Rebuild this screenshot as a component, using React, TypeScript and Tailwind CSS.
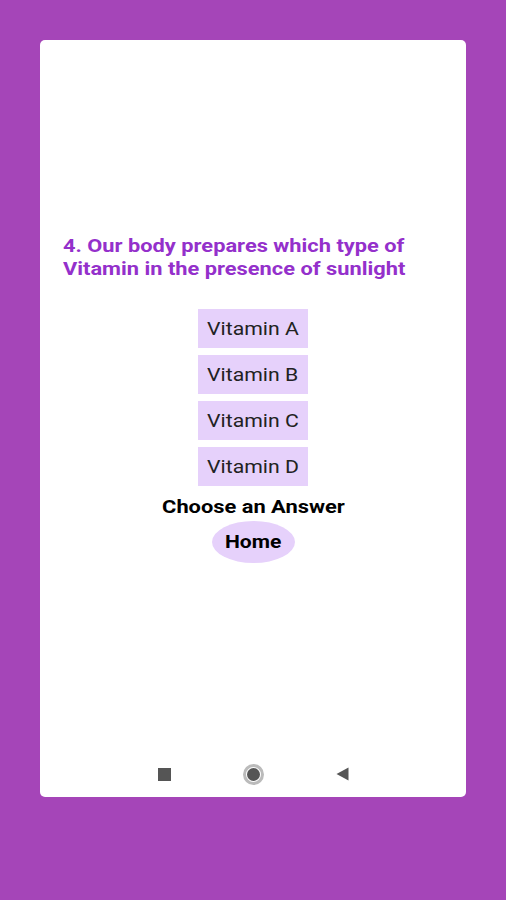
const options = ["Vitamin A", "Vitamin B", "Vitamin C", "Vitamin D"];

const App = () => {
  return (
    <div
      className="w-[506px] h-[900px] bg-[#a545b8] pt-[40px] px-[40px]"
      style={{ fontFamily: "Roboto, 'Liberation Sans', sans-serif" }}
    >
      <div className="w-[426px] h-[757px] bg-white rounded-[5px] flex flex-col">
        <div className="flex-1 flex flex-col justify-center pt-[8px]">
          <h1 className="px-[23px] text-[18.5px] leading-[23px] font-bold text-[#9430cb]">
            <span className="inline-block origin-left scale-x-[1.18]">
              4. Our body prepares which type of
              <br />
              Vitamin in the presence of sunlight
            </span>
          </h1>
          <div className="mt-[28px] flex flex-col items-center gap-[7px]">
            {options.map((o) => (
              <div
                key={o}
                className="w-[110px] h-[39px] bg-[#e6d1fb] flex items-center justify-center"
              >
                <span className="text-[18px] text-[#222] scale-x-[1.18]">{o}</span>
              </div>
            ))}
          </div>
          <p className="mt-[9px] flex justify-center text-[19px] leading-[23px] font-bold text-black">
            <span className="scale-x-[1.15]">Choose an Answer</span>
          </p>
          <div className="mt-[3px] flex justify-center">
            <div className="w-[83px] h-[42px] rounded-[50%] bg-[#e6d1fb] flex items-center justify-center">
              <span className="text-[18px] font-bold text-black scale-x-[1.17]">Home</span>
            </div>
          </div>
        </div>
        <div className="h-[48px] flex items-center justify-center pt-[2px]">
          <div className="w-[89px] flex justify-center">
            <div className="w-[13px] h-[13px] bg-[#555]" />
          </div>
          <div className="w-[89px] flex justify-center">
            <div className="w-[21px] h-[21px] rounded-full border-[3px] border-[#bbb] flex items-center justify-center">
              <div className="w-[13px] h-[13px] rounded-full bg-[#555]" />
            </div>
          </div>
          <div className="w-[89px] flex justify-center">
            <svg width="13" height="14" viewBox="0 0 13 14">
              <path d="M0.5 7 L12.5 0.5 L12.5 13.5 Z" fill="#555" />
            </svg>
          </div>
        </div>
      </div>
    </div>
  );
};

export default App;
